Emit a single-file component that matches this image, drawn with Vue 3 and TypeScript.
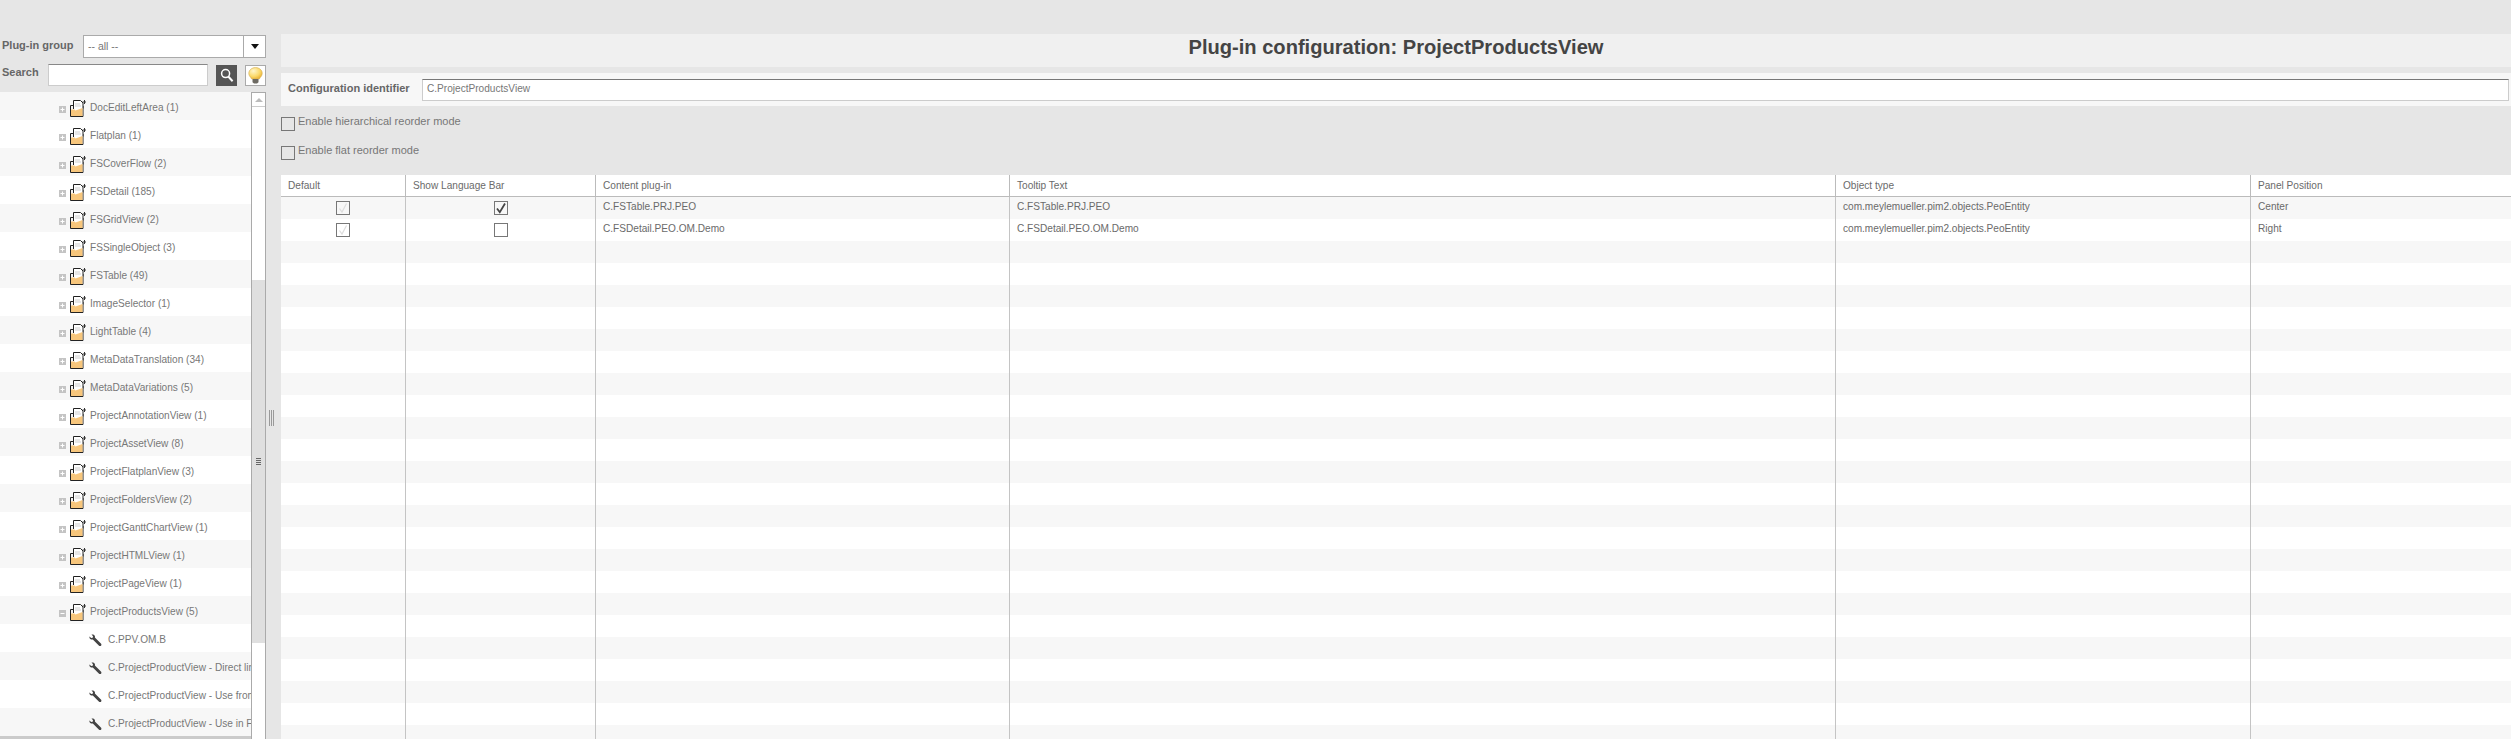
<script setup lang="ts">
interface TreeRow { label: string; kind: 'closed' | 'open' | 'leaf' }
const closed = [
  'DocEditLeftArea (1)', 'Flatplan (1)', 'FSCoverFlow (2)', 'FSDetail (185)', 'FSGridView (2)',
  'FSSingleObject (3)', 'FSTable (49)', 'ImageSelector (1)', 'LightTable (4)', 'MetaDataTranslation (34)',
  'MetaDataVariations (5)', 'ProjectAnnotationView (1)', 'ProjectAssetView (8)', 'ProjectFlatplanView (3)',
  'ProjectFoldersView (2)', 'ProjectGanttChartView (1)', 'ProjectHTMLView (1)', 'ProjectPageView (1)',
]
const tree: TreeRow[] = [
  ...closed.map((label) => ({ label, kind: 'closed' as const })),
  { label: 'ProjectProductsView (5)', kind: 'open' },
  { label: 'C.PPV.OM.B', kind: 'leaf' },
  { label: 'C.ProjectProductView - Direct link', kind: 'leaf' },
  { label: 'C.ProjectProductView - Use from list', kind: 'leaf' },
  { label: 'C.ProjectProductView - Use in Flatplan', kind: 'leaf' },
]
const columns = ['Default', 'Show Language Bar', 'Content plug-in', 'Tooltip Text', 'Object type', 'Panel Position']
const rows = [
  { lang: true, plugin: 'C.FSTable.PRJ.PEO', tip: 'C.FSTable.PRJ.PEO', type: 'com.meylemueller.pim2.objects.PeoEntity', pos: 'Center' },
  { lang: false, plugin: 'C.FSDetail.PEO.OM.Demo', tip: 'C.FSDetail.PEO.OM.Demo', type: 'com.meylemueller.pim2.objects.PeoEntity', pos: 'Right' },
]
const emptyRows = Array.from({ length: 23 }, (_, i) => i)
</script>

<template>
  <div class="page">
    <aside class="left">
      <div class="filter one">
        <label class="flabel">Plug-in group</label>
        <div class="select">
          <span class="sval">-- all --</span>
          <span class="sarrow"><i></i></span>
        </div>
      </div>
      <div class="filter two">
        <label class="flabel slabel">Search</label>
        <div class="search"></div>
        <button class="sbtn" aria-label="Search">
          <svg width="14" height="15" viewBox="0 0 14 15"><circle cx="5.600" cy="5.600" r="4" fill="none" stroke="#fff" stroke-width="1.500"/><path d="M8.500 8.800 12.600 13.200" stroke="#fff" stroke-width="2"/></svg>
        </button>
        <button class="bulb" aria-label="Hint">
          <svg width="15" height="17" viewBox="0 0 15 17">
            <defs><radialGradient id="bulbg" cx="0.35" cy="0.3" r="0.8"><stop offset="0" stop-color="#fff6cc"/><stop offset="0.6" stop-color="#fbd96a"/><stop offset="1" stop-color="#e8aa2a"/></radialGradient></defs>
            <path d="M7.500.6C3.700.6.800 3.200.8 6.500c0 2.400 1.900 3.500 2.800 5.400h7.800c.9-1.900 2.800-3 2.800-5.400C14.400 3.200 11.300.6 7.500.6Z" fill="url(#bulbg)" stroke="#d8b45a" stroke-width=".7"/>
            <path d="M4.500 12h6v3.200l-1.500 1.300h-3l-1.500-1.300Z" fill="#6d6a62"/>
          </svg>
        </button>
      </div>
      <div class="treewrap">
        <div class="treecol">
          <ul class="tree">
            <li v-for="r in tree" :key="r.label" class="node" :class="{ leaf: r.kind === 'leaf' }">
              <template v-if="r.kind !== 'leaf'">
                <span class="exp"><svg width="7" height="7" viewBox="0 0 7 7"><rect width="7" height="7" fill="#c4c4c4"/><path d="M1.500 3.500h4" stroke="#fff"/><path v-if="r.kind === 'closed'" d="M3.500 1.500v4" stroke="#fff"/></svg></span>
                <svg class="ficon" width="16" height="17" viewBox="0 0 16 17">
                  <path d="M.5 5.500h3M.5 5.500V16.500H13V6" fill="#fff" stroke="#222"/>
                  <path d="M1 6h3v3H1Z" fill="#f4f4f4"/>
                  <path d="M3.500 9V.5h7l2.500 2.500v5.500" fill="#fff" stroke="#222"/>
                  <path d="M5 4h5M5 6h6" stroke="#cfcfcf"/>
                  <path d="M1 9.500h3.500l1 1 7-2.500V16H1Z" fill="#f7c67c"/>
                  <path d="M14.500 0v4M12.500 2h4" stroke="#333"/>
                </svg>
              </template>
              <svg v-else class="wrench" width="13" height="13" viewBox="0 0 13 13">
                <path d="M.5 2.500 2.200 4l1.500-.3L4 2.200 2.500.6C4 .1 5.500.8 5.900 2.100c.1.600.1 1 0 1.400l6 6c.9.900.6 2.200-.6 2.500-.5.100-1 0-1.500-.5l-6-6c-1.700.4-3.900-.9-3.300-3Z" fill="#444"/>
              </svg>
              <span class="ntext">{{ r.label }}</span>
            </li>
          </ul>
          <div class="treefoot"></div>
        </div>
        <div class="sbar">
          <div class="sup"><i></i></div>
          <div class="strack"></div>
          <div class="sthumb"><span class="grip"><i></i><i></i><i></i><i></i></span></div>
          <div class="strack rest"></div>
        </div>
      </div>
    </aside>

    <div class="splitter"><span class="sgrip"><i></i><i></i><i></i></span></div>

    <main class="right">
      <h1 class="title">Plug-in configuration: ProjectProductsView</h1>
      <div class="config">
        <label class="clabel">Configuration identifier</label>
        <div class="cinput">C.ProjectProductsView</div>
      </div>
      <div class="options">
        <div class="opt"><span class="cb"></span><span>Enable hierarchical reorder mode</span></div>
        <div class="opt"><span class="cb"></span><span>Enable flat reorder mode</span></div>
      </div>
      <table class="grid">
        <colgroup>
          <col class="c1" /><col class="c2" /><col class="c3" /><col class="c4" /><col class="c5" /><col />
        </colgroup>
        <thead>
          <tr><th v-for="c in columns" :key="c">{{ c }}</th></tr>
        </thead>
        <tbody>
          <tr v-for="r in rows" :key="r.plugin">
            <td class="ctr"><span class="cb"><svg width="12" height="12" viewBox="0 0 12 12"><path d="M2.500 6.500 5 10l4.500-8.500" fill="none" stroke="#ddd" stroke-width="1.200"/></svg></span></td>
            <td class="ctr"><span class="cb"><svg v-if="r.lang" width="12" height="12" viewBox="0 0 12 12"><path d="M2 6.500 4.800 10.200 10 1.500" fill="none" stroke="#444" stroke-width="1.800"/></svg></span></td>
            <td>{{ r.plugin }}</td>
            <td>{{ r.tip }}</td>
            <td>{{ r.type }}</td>
            <td>{{ r.pos }}</td>
          </tr>
          <tr v-for="i in emptyRows" :key="i"><td v-for="c in columns" :key="c"></td></tr>
        </tbody>
      </table>
    </main>
  </div>
</template>

<style>
html, body { margin: 0; padding: 0; background: #e6e6e6; overflow: hidden; }
</style>

<style scoped>
.page {
  display: flex;
  width: 2511px;
  height: 739px;
  overflow: hidden;
  background: #e6e6e6;
  font-family: "Liberation Sans", Arial, sans-serif;
  font-size: 10.1px;
  color: #6a6a6a;
}
.left { width: 266px; flex: none; display: flex; flex-direction: column; padding-top: 35px; box-sizing: border-box; }
.filter { display: flex; align-items: center; flex: none; }
.one { height: 23px; }
.two { height: 22px; margin-top: 6px; }
.flabel { font-weight: bold; font-size: 11px; color: #666; padding-left: 2px; width: 81px; margin-top: -3px; white-space: nowrap; }
.slabel { width: 46px; margin-top: -7px; }
.select { flex: none; width: 183px; height: 23px; box-sizing: border-box; border: 1px solid #aaa; background: #fff; display: flex; }
.sval { flex: 1; line-height: 21px; padding-left: 4px; color: #777; font-size: 10.5px; }
.sarrow { width: 21px; border-left: 1px solid #aaa; display: flex; align-items: center; justify-content: center; }
.sarrow i { width: 0; height: 0; border: 4px solid transparent; border-top: 5px solid #111; border-bottom: 0; }
.search { width: 160px; height: 22px; box-sizing: border-box; background: #fff; border: 1px solid #ccc; border-top-color: #888; flex: none; }
.sbtn { width: 21px; height: 21px; margin-left: 8px; padding: 0; border: 0; background: #555; display: flex; align-items: center; justify-content: center; flex: none; }
.bulb { width: 21px; height: 21px; margin-left: 8px; padding: 0; border: 1px solid #aaa; background: #fff; display: flex; align-items: center; justify-content: center; flex: none; box-sizing: border-box; }
.treewrap { flex: 1; display: flex; margin-top: 6px; min-height: 0; }
.treecol { flex: 1; min-width: 0; display: flex; flex-direction: column; }
.tree { list-style: none; margin: 0; padding: 0; flex: none; }
.node { height: 28px; display: flex; align-items: center; padding-left: 59px; background: #fff; white-space: nowrap; overflow: hidden; color: #777; }
.node:nth-child(odd) { background: #f7f7f7; }
.node.leaf { padding-left: 89px; }
.exp { display: flex; width: 11px; margin-top: 6px; }
.ficon { flex: none; margin-right: 4px; margin-top: 4px; }
.wrench { flex: none; margin-right: 6px; margin-top: 4px; }
.ntext { margin-top: 2px; }
.treefoot { flex: 1; background: #cbcbcb; }
.sbar { width: 15px; flex: none; box-sizing: border-box; border: 1px solid #aaa; border-bottom: 0; display: flex; flex-direction: column; background: #fff; }
.sup { height: 13px; flex: none; border-bottom: 1px solid #ccc; display: flex; align-items: center; justify-content: center; }
.sup i { width: 0; height: 0; border: 4px solid transparent; border-bottom: 4px solid #bbb; border-top: 0; }
.strack { height: 173px; flex: none; }
.strack.rest { height: auto; flex: 1; }
.sthumb { height: 363px; flex: none; background: #dfdfdf; display: flex; justify-content: center; align-items: flex-start; }
.grip { display: flex; flex-direction: column; gap: 1px; margin-top: 178px; }
.grip i { width: 5px; height: 1px; background: #666; }
.splitter { width: 15px; flex: none; display: flex; align-items: center; justify-content: flex-start; padding-top: 97px; box-sizing: border-box; }
.sgrip { display: flex; gap: 1px; margin-left: 3px; }
.sgrip i { width: 1px; height: 16px; background: #999; }
.right { flex: 1; min-width: 0; padding-top: 34px; display: flex; flex-direction: column; }
.title { margin: 0; flex: none; height: 33px; line-height: 27px; text-align: center; background: #f0f0f0; font-size: 20.1px; font-weight: bold; color: #444; }
.config { margin-top: 6px; flex: none; height: 33px; background: #f7f7f7; display: flex; align-items: center; }
.clabel { width: 141px; flex: none; box-sizing: border-box; padding-left: 7px; font-weight: bold; font-size: 11px; color: #666; margin-top: -3px; }
.cinput { width: 2087px; height: 22px; flex: none; box-sizing: border-box; border: 1px solid #ccc; border-top-color: #777; background: #fff; line-height: 18px; padding-left: 4px; color: #777; }
.options { flex: none; height: 69px; padding-top: 11px; box-sizing: border-box; }
.opt { display: flex; height: 29px; align-items: flex-start; font-size: 11px; color: #777; }
.opt span:last-child { margin-left: 3px; margin-top: -2px; }
.cb { display: inline-flex; flex: none; box-sizing: border-box; width: 14px; height: 14px; border: 1px solid #777; background: transparent; vertical-align: middle; align-items: center; justify-content: center; }
.grid { flex: none; width: 2230px; table-layout: fixed; border-collapse: separate; border-spacing: 0; background: #fff; }
.c1 { width: 125px; } .c2 { width: 190px; } .c3 { width: 414px; } .c4 { width: 826px; } .c5 { width: 415px; }
th { height: 22px; box-sizing: border-box; padding: 0 0 0 7px; font-weight: normal; font-size: 10.1px; text-align: left; color: #6a6a6a; border-right: 1px solid #bbb; border-bottom: 1px solid #bbb; line-height: 18px; }
td { height: 22px; padding: 0 0 2px 7px; border-right: 1px solid #c4c4c4; box-sizing: border-box; font-size: 10.1px; color: #6a6a6a; line-height: 18px; vertical-align: middle; white-space: nowrap; overflow: hidden; }
td:last-child, th:last-child { border-right: 0; }
tbody tr:nth-child(odd) td { background: #f7f7f7; }
td.ctr { padding: 0; text-align: center; line-height: 0; }
</style>
